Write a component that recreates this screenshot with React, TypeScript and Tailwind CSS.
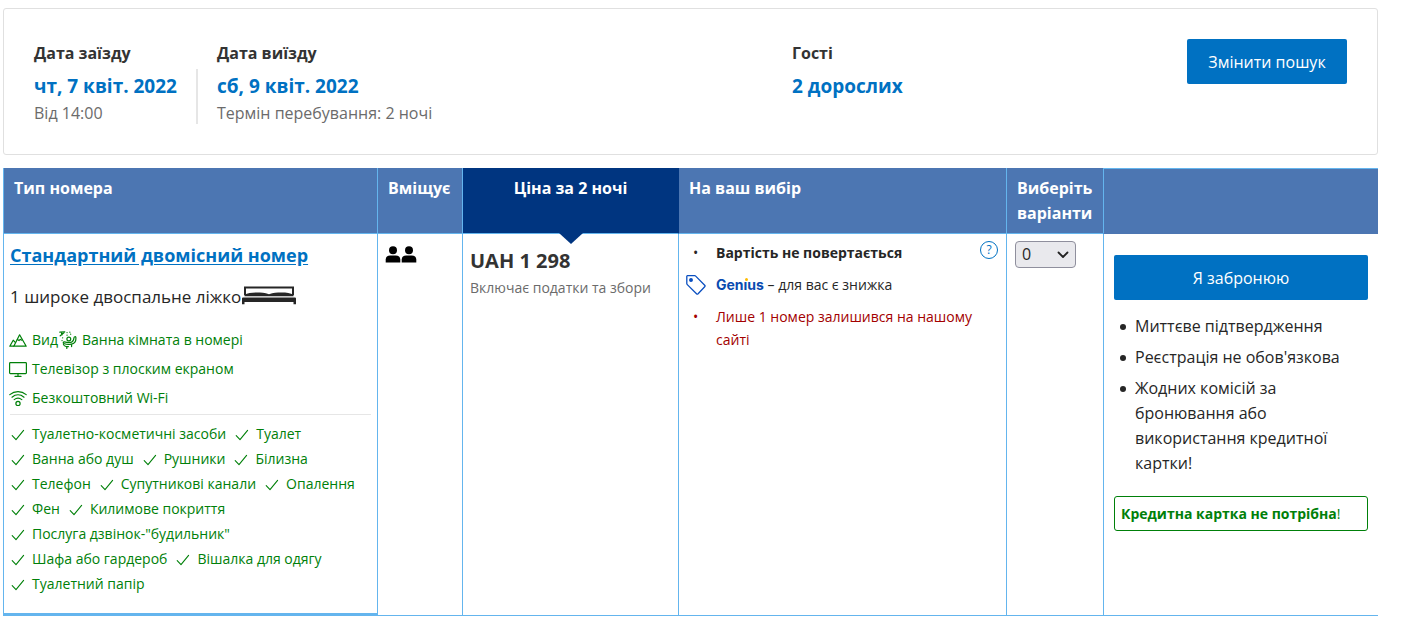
import type { ReactNode } from "react";

const roomFacilities = [
  "Туалетно-косметичні засоби",
  "Туалет",
  "Ванна або душ",
  "Рушники",
  "Білизна",
  "Телефон",
  "Супутникові канали",
  "Опалення",
  "Фен",
  "Килимове покриття",
  'Послуга дзвінок-"будильник"',
  "Шафа або гардероб",
  "Вішалка для одягу",
  "Туалетний папір",
];

const bookingBenefits = [
  "Миттєве підтвердження",
  "Реєстрація не обов'язкова",
  "Жодних комісій за бронювання або використання кредитної картки!",
];

function MountainIcon() {
  return (
    <svg className="size-[18px] shrink-0" viewBox="0 0 18 18" fill="none" stroke="currentColor" strokeWidth="1.2" strokeLinejoin="round" strokeLinecap="round" aria-hidden="true">
      <path d="M4.800 15.200 10.600 3.800 17.200 15.200Z" />
      <path d="M4.600 15.200H.8L4.200 9.200l1.800 2M8.400 8.400l1.600 1.200 1.200-1.200 1.600.8" />
    </svg>
  );
}

function BathIcon() {
  return (
    <svg className="size-[18px] shrink-0" viewBox="0 0 18 18" fill="none" stroke="currentColor" strokeWidth="1.200" strokeLinecap="round" strokeLinejoin="round" aria-hidden="true">
      <path d="M.8 1.200 5.800.8M2.400 1.200l.6 2.600M1.200 4.800l4-3.200" />
      <path d="M8 1.600h.1M10.800 1.200h.1M8 4.200h.1M3.600 6.800h.1M3 9.600h.1M11.600 3.200h.1" />
      <circle cx="9.800" cy="8" r="1.900" />
      <path d="M16.800 6.200c.5 3.600-1 6.200-4.400 6.900-2.800.6-5.400.3-7.400-.6-1.200-.6-.8-1.800.3-1.700 2.500.5 5 .8 7.200.3 1.700-.5 2.300-2 2.500-4.300.1-1.200 1.600-1.400 1.800-.6Z" />
      <path d="M4.400 13.200c.4 1.600 1.600 2.300 3 2.400h2M7.800 15.600v1.800M12.600 13.600v2" />
    </svg>
  );
}

function ScreenIcon() {
  return (
    <svg className="size-[18px] shrink-0" viewBox="0 0 18 18" fill="none" stroke="currentColor" strokeWidth="1.2" strokeLinecap="round" strokeLinejoin="round" aria-hidden="true">
      <rect x=".6" y="2.600" width="16.800" height="11" rx=".8" />
      <path d="M9 13.600v2.800M6 16.400h6" />
    </svg>
  );
}

function WifiIcon() {
  return (
    <svg className="size-[18px] shrink-0" viewBox="0 0 18 18" fill="none" stroke="currentColor" strokeWidth="1.2" strokeLinecap="round" aria-hidden="true">
      <path d="M.8 5.600c4.800-4 11.600-4 16.400 0M3 8.200c3.600-3 8.400-3 12 0M5.200 10.600c2.400-1.900 5.200-1.900 7.600 0" />
      <circle cx="9" cy="14.400" r="2.100" />
    </svg>
  );
}

function CheckIcon() {
  return (
    <svg className="size-4 shrink-0" viewBox="0 0 16 16" fill="none" stroke="currentColor" strokeWidth="1.1" strokeLinecap="round" strokeLinejoin="round" aria-hidden="true">
      <path d="m2.200 9.600 3.800 4 7.600-9.200" />
    </svg>
  );
}

function BedIcon() {
  return (
    <svg className="mb-1 h-5 w-14 shrink-0 text-[#262626]" viewBox="0 0 56 20" fill="currentColor" aria-hidden="true">
      <path d="M3 1.500h50v8.500h-2V3.500H5V10H3Z" />
      <path d="M3.500 11.200V9.800c3-1.600 7-2.200 12-2.200 5 0 8 .4 12.500 1.600 4.500-1.200 7.500-1.600 12.500-1.600s9 .6 12 2.200v1.400Z" />
      <path d="M2 12.500h52a1 1 0 0 1 1 1v5.700h-2.500V17h-49v2.200H1v-5.700a1 1 0 0 1 1-1Z" />
    </svg>
  );
}

function PersonIcon() {
  return (
    <svg className="h-[17px] w-4" viewBox="0 0 16 17" fill="currentColor" aria-hidden="true">
      <circle cx="8" cy="4.200" r="4" />
      <path d="M.7 16.500v-3c0-2.600 1.900-4.100 4.400-4.100h5.800c2.500 0 4.400 1.500 4.400 4.100v3Z" />
    </svg>
  );
}

function TagIcon() {
  return (
    <svg className="size-5" viewBox="0 0 20 20" fill="none" stroke="#0a4fc0" strokeWidth="1.300" strokeLinejoin="round" aria-hidden="true">
      <path d="M1.400.7h7.300c.4 0 .7.100 1 .4l9 9.100c.5.500.5 1 0 1.500l-6.600 7c-.5.500-1.100.5-1.600 0L1.300 9.600c-.3-.3-.5-.6-.5-1V1.300c0-.4.200-.6.600-.6Z" />
      <circle cx="5" cy="5" r="1.300" fill="#0a4fc0" />
    </svg>
  );
}

function Amenity({ icon, children }: { icon: ReactNode; children: ReactNode }) {
  return (
    <li className="flex items-center gap-[5px]">
      {icon}
      <span>{children}</span>
    </li>
  );
}

function SearchSummary() {
  return (
    <section className="flex items-start rounded-[3px] border border-[#e0e0e0] p-[30px] text-base leading-[26px] text-[#6b6b6b]">
      <dl className="grid grow grid-cols-[164px_minmax(0,1fr)_395px] pt-px">
        <div className="flex flex-col">
          <dt className="font-bold text-[#333]">Дата заїзду</dt>
          <dd className="mt-[3px] border-r-2 border-[#e6e6e6] pb-px">
            <p className="text-[19px] leading-[34px] font-bold text-[#0071c2]">чт, 7 квіт. 2022</p>
            <p className="leading-5">Від 14:00</p>
          </dd>
        </div>
        <div className="flex flex-col pl-[19px]">
          <dt className="font-bold text-[#333]">Дата виїзду</dt>
          <dd className="mt-[3px]">
            <p className="text-[19px] leading-[34px] font-bold text-[#0071c2]">сб, 9 квіт. 2022</p>
            <p className="leading-5">Термін перебування: 2 ночі</p>
          </dd>
        </div>
        <div>
          <dt className="font-bold text-[#333]">Гості</dt>
          <dd className="mt-[3px] text-[19px] leading-[34px] font-bold text-[#0071c2]">2 дорослих</dd>
        </div>
      </dl>
      <button type="button" className="mb-10 h-[45px] w-40 rounded-xs bg-[#0071c2] text-base text-white">
        Змінити пошук
      </button>
    </section>
  );
}

function RoomCell() {
  return (
    <td className="border-b-3 border-l border-[#64b5ee] px-[6px] pt-[7px] pb-[17px]">
      <a href="#room" className="block text-lg leading-7 font-bold text-[#0071c2] underline underline-offset-2">
        Стандартний двомісний номер
      </a>
      <p className="mt-[14px] flex items-center text-[17px] leading-7 text-[#262626]">
        1 широке двоспальне ліжко
        <BedIcon />
      </p>
      <div className="mt-[14px] text-sm text-[#008009]">
        <ul className="-ml-px leading-[29px]">
          <li>
            <ul className="flex gap-px">
              <Amenity icon={<MountainIcon />}>Вид</Amenity>
              <Amenity icon={<BathIcon />}>Ванна кімната в номері</Amenity>
            </ul>
          </li>
          <Amenity icon={<ScreenIcon />}>Телевізор з плоским екраном</Amenity>
          <Amenity icon={<WifiIcon />}>Безкоштовний Wi-Fi</Amenity>
        </ul>
        <ul className="mt-[2px] flex flex-wrap gap-x-2 border-t border-[#e6e6e6] pt-[6px] leading-[25px]">
          {roomFacilities.map((facility) => (
            <li key={facility} className="flex items-center gap-[6px]">
              <CheckIcon />
              {facility}
            </li>
          ))}
        </ul>
      </div>
    </td>
  );
}

function ConditionsCell() {
  return (
    <td className="border-b border-l border-[#64b5ee] px-[7px] pt-[7px] text-sm leading-[23px] text-[#262626]">
      <ul>
        <li className="flex">
          <span className="w-[30px] shrink-0 pl-[7px]">•</span>
          <strong className="grow">Вартість не повертається</strong>
          <button type="button" aria-label="Умови" className="mr-[1px] grid size-[18px] place-items-center rounded-full border border-[#0071c2] text-xs text-[#0071c2]">
            ?
          </button>
        </li>
        <li className="mt-[9px] flex items-center">
          <span className="w-[30px] shrink-0">
            <TagIcon />
          </span>
          <span>
            <b className="font-['Inter',sans-serif] text-sm text-[#0a4bb0]">
              Gen
              <span className="relative">
                ı<i aria-hidden="true" className="absolute top-[2px] left-px size-[3px] rounded-full bg-[#febb02]" />
              </span>
              us
            </b>{" "}
            – для вас є знижка
          </span>
        </li>
        <li className="mt-[9px] flex text-[#a30000]">
          <span className="w-[30px] shrink-0 pl-[7px]">•</span>
          Лише 1 номер залишився на нашому сайті
        </li>
      </ul>
    </td>
  );
}

function BookingCell() {
  return (
    <td className="border-b border-l border-[#64b5ee] px-[10px] pt-[21px] text-base text-[#262626]">
      <button type="button" className="h-[45px] w-full rounded-xs bg-[#0071c2] text-white">
        Я забронюю
      </button>
      <ul className="mt-[14px] flex flex-col gap-[6px] pl-[6px] leading-[25px]">
        {bookingBenefits.map((benefit) => (
          <li key={benefit} className="flex gap-[9px]">
            <span aria-hidden="true" className="mt-[10px] size-[6px] shrink-0 rounded-full bg-[#262626]" />
            {benefit}
          </li>
        ))}
      </ul>
      <p className="mt-5 rounded-[3px] border border-[#008009] px-[6px] py-1 text-sm leading-[25px] text-[#008009]">
        <strong>Кредитна картка не потрібна</strong>!
      </p>
    </td>
  );
}

export default function App() {
  return (
    <main className="min-h-screen bg-white pt-2 pr-12 pb-5 pl-[3px] font-['Open_Sans','Noto_Sans',sans-serif]">
      <SearchSummary />
      <table className="mt-[13px] w-full table-fixed border-separate border-spacing-0">
        <colgroup>
          <col className="w-[374px]" />
          <col className="w-[85px]" />
          <col className="w-[216px]" />
          <col className="w-[328px]" />
          <col className="w-[97px]" />
          <col />
        </colgroup>
        <thead>
          <tr className="text-left align-top text-base leading-[25px] text-white *:border-b *:border-l *:border-[#64b5ee] *:bg-[#4c76b2] *:px-[10px] *:pt-2 *:pb-[7px] *:font-bold">
            <th>Тип номера</th>
            <th>Вміщує</th>
            <th className="relative bg-[#003580]! text-center">
              Ціна за 2 ночі
              <i aria-hidden="true" className="absolute top-full left-1/2 -ml-3 border-x-12 border-t-11 border-x-transparent border-t-[#003580]" />
            </th>
            <th className="border-l-[#003580]!">На ваш вибір</th>
            <th>Виберіть варіанти</th>
            <th aria-label="Бронювання" className="border-t border-b-[#4c76b2]!" />
          </tr>
        </thead>
        <tbody>
          <tr className="align-top">
            <RoomCell />
            <td className="border-b border-l border-[#64b5ee] px-[7px] pt-3">
              <div className="flex text-black" role="img" aria-label="2 дорослих">
                <PersonIcon />
                <PersonIcon />
              </div>
            </td>
            <td className="border-b border-l border-[#64b5ee] px-[7px] pt-[13px]">
              <p className="text-xl leading-7 font-bold text-[#333]">UAH 1 298</p>
              <p className="text-sm leading-[26px] text-[#6b6b6b]">Включає податки та збори</p>
            </td>
            <ConditionsCell />
            <td className="border-b border-l border-[#64b5ee] px-2 pt-[7px]">
              <div className="relative w-[61px]">
                <select aria-label="Кількість номерів" className="h-[27px] w-full appearance-none rounded-[4px] border border-[#8f8f9d] bg-[#e9e9ed] pl-[6px] text-base leading-[25px] text-[#262626]">
                  <option>0</option>
                  <option>1</option>
                </select>
                <svg className="pointer-events-none absolute top-2 right-[7px] h-[11px] w-3" viewBox="0 0 12 11" fill="none" stroke="#222" strokeWidth="1.800" strokeLinecap="round" strokeLinejoin="round" aria-hidden="true">
                  <path d="m1.500 3.500 4.500 4.500 4.500-4.500" />
                </svg>
              </div>
            </td>
            <BookingCell />
          </tr>
        </tbody>
      </table>
    </main>
  );
}
